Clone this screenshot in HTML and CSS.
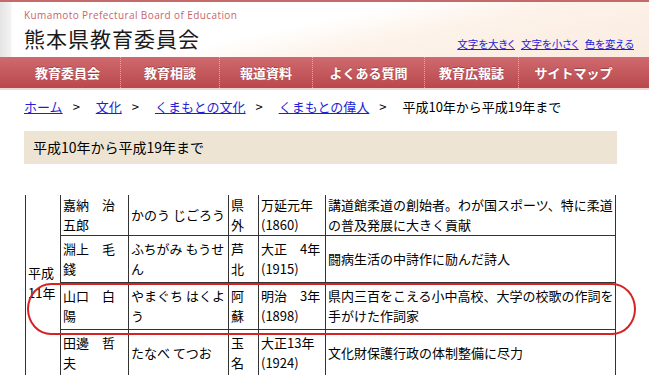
FILE: index.html
```html
<!DOCTYPE html>
<html>
<head>
    <meta charset="utf-8">
    <title>平成10年から平成19年まで | 熊本県教育委員会</title>
    <link rel="stylesheet" href="styles.css">
</head>
<body>
    <div class="header">
        <div class="brand">
            <p class="brand-en">Kumamoto Prefectural Board of Education</p>
            <h1 class="brand-ja">熊本県教育委員会</h1>
        </div>
        <ul class="tools">
            <li><a href="#">文字を大きく</a></li>
            <li><a href="#">文字を小さく</a></li>
            <li><a href="#">色を変える</a></li>
        </ul>
    </div>

    <ul class="gnav">
        <li><a href="#">教育委員会</a></li>
        <li><a href="#">教育相談</a></li>
        <li><a href="#">報道資料</a></li>
        <li><a href="#">よくある質問</a></li>
        <li><a href="#">教育広報誌</a></li>
        <li><a href="#">サイトマップ</a></li>
    </ul>

    <div class="content">
        <p class="breadcrumb">
            <a href="#">ホーム</a><span class="sep">&gt;</span>
            <a href="#">文化</a><span class="sep">&gt;</span>
            <a href="#">くまもとの文化</a><span class="sep">&gt;</span>
            <a href="#">くまもとの偉人</a><span class="sep">&gt;</span>
            平成10年から平成19年まで
        </p>

        <h2 class="page-title">平成10年から平成19年まで</h2>

        <div class="table-wrap">
            <table class="people">
                <colgroup>
                    <col class="c-year">
                    <col class="c-name">
                    <col class="c-kana">
                    <col class="c-place">
                    <col class="c-born">
                    <col class="c-desc">
                </colgroup>
                <tr class="first">
                    <td class="year" rowspan="4">平成11年</td>
                    <td>嘉納　治五郎</td>
                    <td>かのう じごろう</td>
                    <td>県外</td>
                    <td>万延元年(1860)</td>
                    <td class="desc">講道館柔道の創始者。わが国スポーツ、特に柔道の普及発展に大きく貢献</td>
                </tr>
                <tr>
                    <td>淵上　毛錢</td>
                    <td>ふちがみ もうせん</td>
                    <td>芦北</td>
                    <td>大正　4年(1915)</td>
                    <td class="desc">闘病生活の中詩作に励んだ詩人</td>
                </tr>
                <tr>
                    <td>山口　白陽</td>
                    <td>やまぐち はくよう</td>
                    <td>阿蘇</td>
                    <td>明治　3年(1898)</td>
                    <td class="desc">県内三百をこえる小中高校、大学の校歌の作詞を手がけた作詞家</td>
                </tr>
                <tr>
                    <td>田邊　哲夫</td>
                    <td>たなべ てつお</td>
                    <td>玉名</td>
                    <td>大正13年(1924)</td>
                    <td class="desc">文化財保護行政の体制整備に尽力</td>
                </tr>
            </table>
            <div class="mark"></div>
        </div>
    </div>
</body>
</html>
```

FILE: styles.css
```css
* {
    margin: 0;
    padding: 0;
    box-sizing: border-box;
}

body {
    background: #ffffff;
    color: #000000;
    font-family: "Noto Sans CJK JP", sans-serif;
    font-size: 13px;
}

ul {
    list-style: none;
}

a {
    color: #1f1fd6;
}

/* header */

.header {
    display: flex;
    justify-content: space-between;
    align-items: flex-end;
    height: 57px;
    padding: 6px 15px 6px 24px;
    border-top: 2px solid #c46a6a;
    background:
        linear-gradient(to right, #e4e4e4, #f3f3f3 11px, rgba(255, 255, 255, 0) 12px),
        linear-gradient(168deg, #ffffff 45%, #fdf3ea 62%, #faebe0 100%);
}

.brand-en {
    font-family: "Open Sans", sans-serif;
    font-size: 10px;
    line-height: 12px;
    letter-spacing: 0.4px;
    color: #c9656a;
}

.brand-ja {
    margin-top: 4px;
    font-size: 21px;
    line-height: 26px;
    font-weight: normal;
    letter-spacing: 1px;
    color: #1a1a1a;
}

.tools {
    display: flex;
    gap: 6px;
    font-size: 10.5px;
    line-height: 14px;
    font-feature-settings: "palt";
}

/* global nav */

.gnav {
    display: grid;
    grid-template-columns: 15px 105px 99px 93px 112px 94px 110px;
    height: 33px;
    padding-bottom: 2px;
    border-bottom: 2px solid #f3d4d4;
    background: linear-gradient(#cf6a6e, #b9484d);
}

.gnav li:first-child {
    grid-column: 2;
}

.gnav li + li {
    border-left: 1px dotted #e7a6a8;
}

.gnav a {
    display: block;
    line-height: 31px;
    text-align: center;
    font-size: 13px;
    font-weight: bold;
    color: #ffffff;
    text-decoration: none;
    text-shadow: 0 -1px 0 rgba(90, 20, 20, 0.35);
}

/* content */

.content {
    padding: 0 32px 0 24px;
}

.breadcrumb {
    margin-top: 7px;
    line-height: 20px;
}

.breadcrumb .sep {
    margin: 0 13px 0 10px;
}

.page-title {
    margin-top: 14px;
    height: 33px;
    padding-left: 9px;
    line-height: 33px;
    font-size: 14px;
    font-weight: normal;
    background: #ede4d4;
}

.table-wrap {
    position: relative;
    margin-top: 31px;
    padding-left: 1px;
}

.people {
    width: 590px;
    table-layout: fixed;
    border-collapse: collapse;
}

.c-year { width: 35px; }
.c-name { width: 68px; }
.c-kana { width: 100px; }
.c-place { width: 30px; }
.c-born { width: 67px; }
.c-desc { width: 290px; }

.people td {
    padding: 3px 2px;
    border: 1px solid #333333;
    line-height: 20px;
    vertical-align: middle;
    text-align: left;
}

.people .first td {
    border-top: none;
    padding-top: 0;
    padding-bottom: 0;
}

.people td.desc {
    padding-right: 0;
}

.people .first td.year {
    padding: 0 2px 6px;
}

/* red hand-drawn mark over the third row */
.mark {
    position: absolute;
    left: 3px;
    top: 88px;
    width: 609px;
    height: 52px;
    border: 2px solid #d62222;
    border-radius: 24px / 26px;
}
```
